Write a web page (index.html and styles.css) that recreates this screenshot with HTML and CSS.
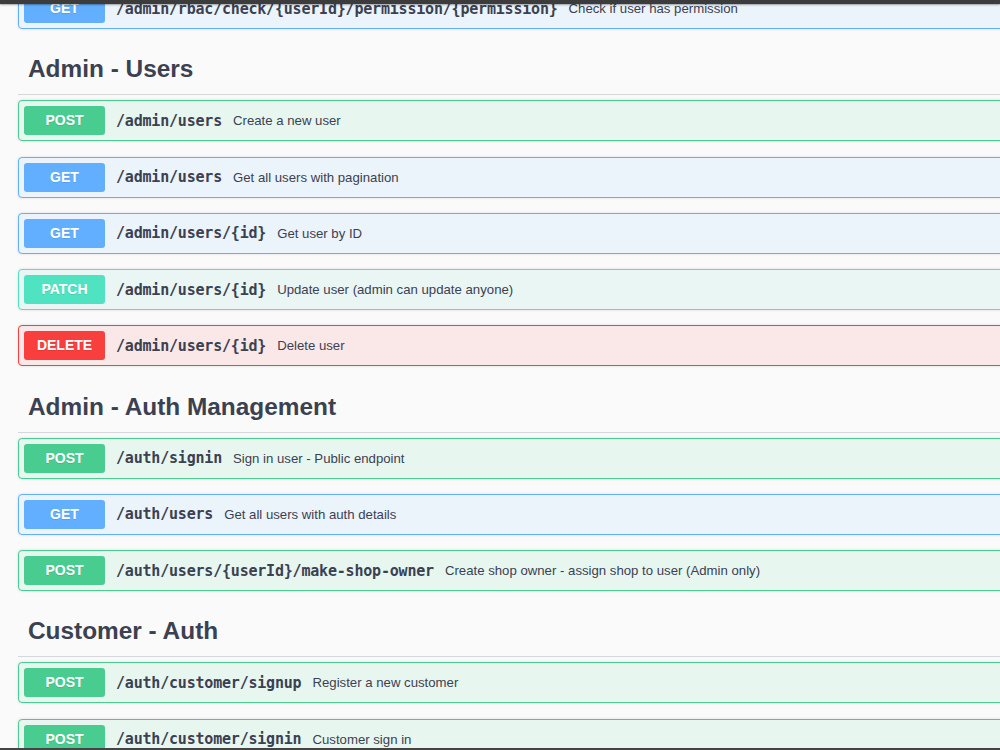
FILE: index.html
```html
<!DOCTYPE html>
<html lang="en">
<head>
    <meta charset="UTF-8">
    <title>Swagger UI</title>
    <link rel="stylesheet" href="styles.css">
</head>
<body>
    <div class="frame-top"></div>
    <div class="swagger">
        <!-- tail of the previous tag -->
        <div class="opblock get">
            <span class="method">GET</span>
            <span class="path">/admin/rbac/check/{userId}/permission/{permission}</span>
            <span class="desc">Check if user has permission</span>
        </div>

        <section class="tag-section">
            <h3 class="tag">Admin - Users</h3>
            <div class="opblock post">
                <span class="method">POST</span>
                <span class="path">/admin/users</span>
                <span class="desc">Create a new user</span>
            </div>
            <div class="opblock get">
                <span class="method">GET</span>
                <span class="path">/admin/users</span>
                <span class="desc">Get all users with pagination</span>
            </div>
            <div class="opblock get">
                <span class="method">GET</span>
                <span class="path">/admin/users/{id}</span>
                <span class="desc">Get user by ID</span>
            </div>
            <div class="opblock patch">
                <span class="method">PATCH</span>
                <span class="path">/admin/users/{id}</span>
                <span class="desc">Update user (admin can update anyone)</span>
            </div>
            <div class="opblock delete">
                <span class="method">DELETE</span>
                <span class="path">/admin/users/{id}</span>
                <span class="desc">Delete user</span>
            </div>
        </section>

        <section class="tag-section">
            <h3 class="tag">Admin - Auth Management</h3>
            <div class="opblock post">
                <span class="method">POST</span>
                <span class="path">/auth/signin</span>
                <span class="desc">Sign in user - Public endpoint</span>
            </div>
            <div class="opblock get">
                <span class="method">GET</span>
                <span class="path">/auth/users</span>
                <span class="desc">Get all users with auth details</span>
            </div>
            <div class="opblock post">
                <span class="method">POST</span>
                <span class="path">/auth/users/{userId}/make-shop-owner</span>
                <span class="desc">Create shop owner - assign shop to user (Admin only)</span>
            </div>
        </section>

        <section class="tag-section">
            <h3 class="tag">Customer - Auth</h3>
            <div class="opblock post">
                <span class="method">POST</span>
                <span class="path">/auth/customer/signup</span>
                <span class="desc">Register a new customer</span>
            </div>
            <div class="opblock post">
                <span class="method">POST</span>
                <span class="path">/auth/customer/signin</span>
                <span class="desc">Customer sign in</span>
            </div>
        </section>
    </div>
    <div class="frame-bottom"></div>
</body>
</html>
```

FILE: styles.css
```css
html, body {
  margin: 0;
  padding: 0;
  height: 100%;
  overflow: hidden;
  background: #fafafa;
  font-family: "Liberation Sans", Arial, sans-serif;
  color: #3b4151;
}
.swagger {
  width: 1400px;
  padding-left: 18px;
  margin-top: -12px;
}
.tag {
  margin: 0 0 5px;
  padding: 10px 20px 10px 10px;
  font-size: 24.4px;
  font-weight: bold;
  line-height: 30px;
  border-bottom: 1px solid #d6d7da;
}
.opblock {
  display: flex;
  align-items: center;
  height: 41px;
  box-sizing: border-box;
  padding: 0 5px;
  margin-bottom: 15.25px;
  border: 1px solid;
  border-radius: 4px;
  box-shadow: 0 0 3px rgba(0, 0, 0, .12);
}
.method {
  width: 81px;
  flex-shrink: 0;
  box-sizing: border-box;
  padding: 6px 0;
  border-radius: 3px;
  text-align: center;
  font-size: 14px;
  font-weight: bold;
  line-height: 17px;
  color: #fff;
  text-shadow: 0 1px 0 rgba(0, 0, 0, .1);
}
.path {
  padding: 0 11px 0 11px;
  font-family: "DejaVu Sans Mono", monospace;
  font-size: 15px;
  font-weight: bold;
  letter-spacing: -0.2px;
  color: #3b4151;
}
.desc {
  font-size: 13.2px;
  color: #3b4151;
}
.post {
  background: #e8f6f0;
  border-color: #49cc90;
}
.post .method { background: #49cc90; }
.get {
  background: #ebf3fb;
  border-color: #61affe;
}
.get .method { background: #61affe; }
.patch {
  background: #e9f6f4;
  border-color: #50e3c2;
}
.patch .method { background: #50e3c2; }
.delete {
  background: #fae7e7;
  border-color: #f93e3e;
}
.delete .method { background: #f93e3e; }

/* dark edges of the captured window */
.frame-top {
  position: absolute;
  top: 0;
  left: 0;
  right: 0;
  height: 4px;
  background: #3c3c3c;
  box-shadow: 0 1px 2px rgba(0, 0, 0, .35);
  z-index: 2;
}
.frame-bottom {
  position: absolute;
  bottom: 0;
  left: 0;
  right: 0;
  height: 2px;
  background: #444;
  z-index: 2;
}
```
